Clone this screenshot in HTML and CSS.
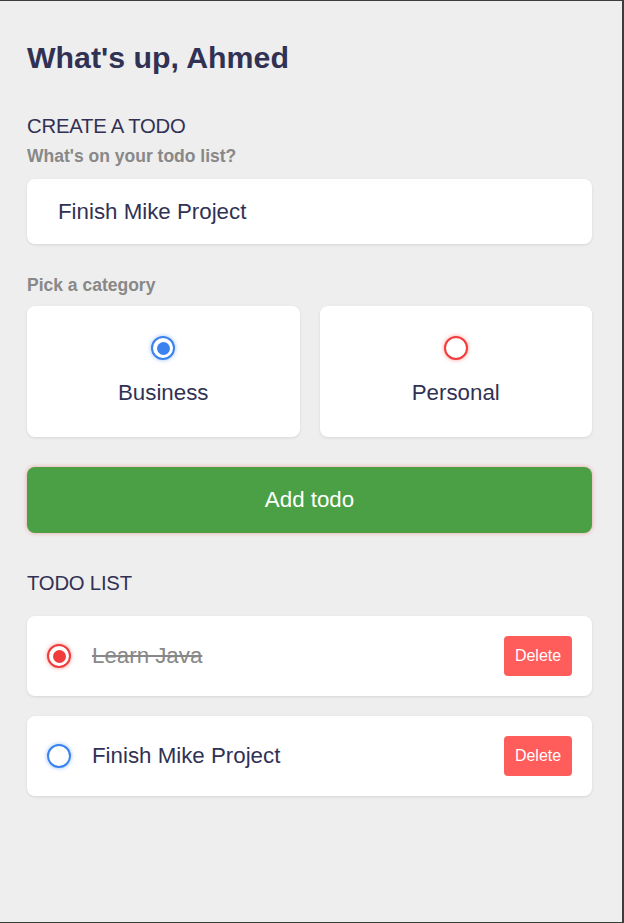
FILE: index.html
```html
<!DOCTYPE html>
<html lang="en">
<head>
<meta charset="utf-8">
<title>Todo</title>
<link rel="stylesheet" href="styles.css">
</head>
<body>
<main class="app">
  <section class="greeting">
    <h2 class="title">What's up, Ahmed</h2>
  </section>

  <section class="create">
    <h3 class="section-title">CREATE A TODO</h3>
    <h4 class="label">What's on your todo list?</h4>
    <div class="input">Finish Mike Project</div>

    <h4 class="label label-cat">Pick a category</h4>
    <div class="options">
      <label class="option">
        <span class="bubble business checked"></span>
        <span class="option-text">Business</span>
      </label>
      <label class="option">
        <span class="bubble personal"></span>
        <span class="option-text">Personal</span>
      </label>
    </div>

    <button class="add">Add todo</button>
  </section>

  <section class="list">
    <h3 class="section-title">TODO LIST</h3>
    <div class="items">
      <div class="item">
        <span class="bubble personal checked"></span>
        <span class="item-text done">Learn Java</span>
        <button class="delete">Delete</button>
      </div>
      <div class="item">
        <span class="bubble business"></span>
        <span class="item-text">Finish Mike Project</span>
        <button class="delete">Delete</button>
      </div>
    </div>
  </section>
</main>
</body>
</html>
```
FILE: styles.css
```css
* { box-sizing: border-box; margin: 0; padding: 0; }

html, body {
  background: #eeeeee;
}

body {
  font-family: "Liberation Sans", Arial, sans-serif;
  color: #313154;
}

.app {
  height: 923px;
  border-top: 1px solid #3c3c3c;
  border-right: 2px solid #3c3c3c;
  border-bottom: 1px solid #3c3c3c;
  padding: 39px 30px 0 27px;
}

.title {
  font-size: 30.3px;
  line-height: 36px;
  font-weight: 700;
}

.create {
  margin-top: 38px;
}

.section-title {
  font-size: 20.3px;
  line-height: 24px;
  font-weight: 400;
  letter-spacing: -0.2px;
}

.label {
  margin-top: 8px;
  font-size: 17.5px;
  line-height: 21px;
  font-weight: 700;
  color: #888888;
}

.label-cat {
  margin-top: 31px;
}

.input {
  margin-top: 12px;
  height: 65px;
  display: flex;
  align-items: center;
  padding: 0 31px;
  background: #ffffff;
  border-radius: 8px;
  box-shadow: 0 1px 3px rgba(0, 0, 0, 0.1);
  font-size: 22.3px;
  color: #313154;
}

.options {
  margin-top: 10px;
  display: grid;
  grid-template-columns: 1fr 1fr;
  gap: 20px;
}

.option {
  display: flex;
  flex-direction: column;
  align-items: center;
  gap: 20px;
  padding: 30px 0 31px;
  background: #ffffff;
  border-radius: 8px;
  box-shadow: 0 1px 3px rgba(0, 0, 0, 0.1);
}

.option-text {
  font-size: 22.3px;
  line-height: 26px;
  color: #313154;
}

.bubble {
  width: 24px;
  height: 24px;
  flex: none;
  border-radius: 50%;
  border: 2px solid;
  display: flex;
  align-items: center;
  justify-content: center;
  background: #ffffff;
}

.bubble.business {
  border-color: #3a82ee;
  box-shadow: 0 0 4px rgba(58, 130, 238, 0.5);
}

.bubble.personal {
  border-color: #f23b3b;
  box-shadow: 0 0 4px rgba(242, 59, 59, 0.5);
}

.bubble.checked::after {
  content: "";
  width: 13px;
  height: 13px;
  border-radius: 50%;
}

.bubble.business.checked::after { background: #3a82ee; }
.bubble.personal.checked::after { background: #f23b3b; }

.add {
  display: block;
  width: 100%;
  margin-top: 30px;
  height: 66px;
  border: none;
  border-radius: 8px;
  background: #4ba045;
  color: #ffffff;
  font-family: "Liberation Sans", Arial, sans-serif;
  font-size: 22.3px;
  box-shadow: 0 0 4px rgba(234, 64, 64, 0.45);
}

.list {
  margin-top: 38px;
}

.items {
  margin-top: 21px;
  display: flex;
  flex-direction: column;
  gap: 20px;
}

.item {
  height: 80px;
  display: flex;
  align-items: center;
  padding: 0 20px;
  gap: 21px;
  background: #ffffff;
  border-radius: 8px;
  box-shadow: 0 1px 3px rgba(0, 0, 0, 0.1);
}

.item-text {
  flex: 1;
  font-size: 22.3px;
  color: #313154;
}

.item-text.done {
  color: #888888;
  text-decoration: line-through;
}

.delete {
  width: 68px;
  height: 40px;
  border: none;
  border-radius: 4px;
  background: #ff5c5c;
  color: #ffffff;
  font-family: "Liberation Sans", Arial, sans-serif;
  font-size: 16px;
}
```
